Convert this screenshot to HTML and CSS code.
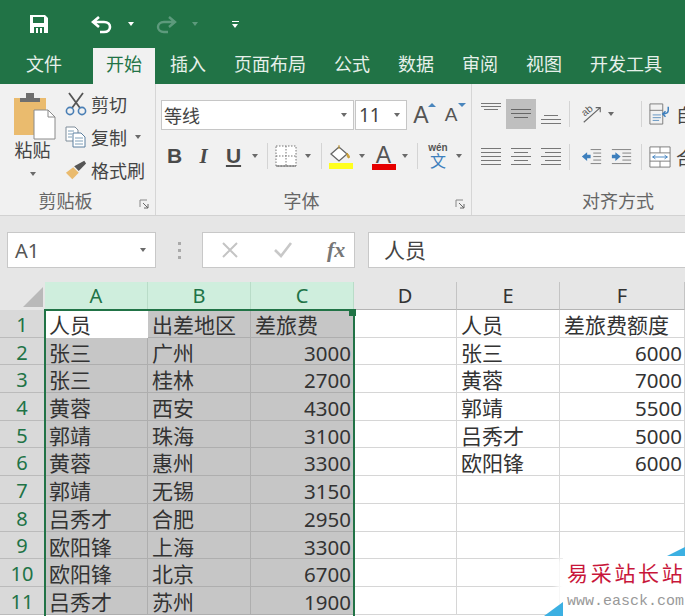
FILE: index.html
```html
<!DOCTYPE html>
<html lang="zh-CN">
<head>
    <meta charset="UTF-8">
    <title>Excel</title>
    <link rel="stylesheet" href="styles.css">
</head>
<body>

    <div class="quick-bar">
        <svg class="qa-save" width="20" height="20" viewBox="0 0 20 20"><path d="M1 1h15l3 3v15H1z" fill="#fff"/><path d="M4 3h11v6H4z" fill="#217346"/><path d="M5 13h10v6H5z" fill="#217346"/><path d="M7 14h2v5H7zM11 14h2v5h-2z" fill="#fff"/></svg>
        <svg class="qa-undo" width="22" height="20" viewBox="0 0 22 20"><path d="M8 2 2 7l6 5M2 7h11c8 0 8 10 0 10H9" fill="none" stroke="#fff" stroke-width="2.6"/></svg>
        <span class="caret caret-white qa-undo-caret"></span>
        <svg class="qa-redo" width="22" height="20" viewBox="0 0 22 20"><path d="M14 2l6 5-6 5M20 7H9c-8 0-8 10 0 10h4" fill="none" stroke="#5d9a7c" stroke-width="2.4"/></svg>
        <span class="caret caret-dim qa-redo-caret"></span>
        <span class="qa-custom"><i></i><span class="caret caret-white"></span></span>
    </div>

    <div class="tabs">
        <div class="tab tab-file">文件</div>
        <div class="tab tab-active">开始</div>
        <div class="tab">插入</div>
        <div class="tab">页面布局</div>
        <div class="tab">公式</div>
        <div class="tab">数据</div>
        <div class="tab">审阅</div>
        <div class="tab">视图</div>
        <div class="tab">开发工具</div>
    </div>

    <div class="ribbon">
        <div class="group group-clip">
            <div class="clip-body">
                <div class="paste">
                    <svg width="44" height="48" viewBox="0 0 44 48"><rect x="1" y="6" width="32" height="37" fill="#eabb6e"/><path d="M7 6h6V1h8v5h6v4H7z" fill="#6f6f6f"/><path d="M21 18h14l7 7v22H21z" fill="#fff" stroke="#8a8a8a"/><path d="M35 18v7h7" fill="none" stroke="#8a8a8a"/></svg>
                    <span class="paste-label">粘贴</span>
                    <span class="caret"></span>
                </div>
                <div class="clip-rows">
                    <div class="clip-row">
                        <svg width="22" height="24" viewBox="0 0 22 24"><path d="M4 1l11 15M18 1 7 16" stroke="#555" stroke-width="1.8" fill="none"/><circle cx="5" cy="19" r="3.600" fill="none" stroke="#4a7fb5" stroke-width="1.600"/><circle cx="17" cy="19" r="3.600" fill="none" stroke="#4a7fb5" stroke-width="1.600"/></svg>
                        <span>剪切</span>
                    </div>
                    <div class="clip-row">
                        <svg width="22" height="22" viewBox="0 0 22 22"><path d="M1 1h9l3 3v11H1z" fill="#fff" stroke="#7f8d9a"/><path d="M8 7h8l4 4v10H8z" fill="#fff" stroke="#5b7f9f"/><path d="M3 5h6M3 8h4M3 11h4M10 12h8M10 15h8M10 18h8" stroke="#7f9fb8"/></svg>
                        <span>复制</span>
                        <span class="caret caret-clip"></span>
                    </div>
                    <div class="clip-row">
                        <svg width="24" height="22" viewBox="0 0 24 22"><path d="M1 14 9 8l6 6-7 7z" fill="#eabb6e"/><path d="M10 7l5 5 8-8-2-3z" fill="#555"/></svg>
                        <span>格式刷</span>
                    </div>
                </div>
            </div>
            <div class="group-foot">
                <span class="group-label">剪贴板</span>
                <svg class="launcher" width="10" height="10" viewBox="0 0 10 10"><path d="M1 8V1h7" fill="none" stroke="#888"/><path d="M4 4l5 5M9 5v4H5" fill="none" stroke="#666"/></svg>
            </div>
        </div>

        <div class="group group-font">
            <div class="font-row">
                <div class="combo combo-name"><span>等线</span><span class="caret"></span></div>
                <div class="combo combo-size"><span>11</span><span class="caret"></span></div>
                <div class="size-btn size-grow">A<i class="tri-up"></i></div>
                <div class="size-btn size-shrink">A<i class="tri-down"></i></div>
            </div>
            <div class="font-tools">
                <span class="tool-b">B</span>
                <span class="tool-i">I</span>
                <span class="tool-u">U</span>
                <span class="caret"></span>
                <span class="sep"></span>
                <svg width="22" height="22" viewBox="0 0 22 22"><path d="M1 1h20v20H1zM11 1v20M1 11h20" fill="#fff" stroke="#777" stroke-dasharray="1.500 1.500"/><path d="M1 21h20" stroke="#666"/></svg>
                <span class="caret"></span>
                <span class="sep"></span>
                <div class="tool-color">
                    <svg width="24" height="18" viewBox="0 0 24 18"><path d="M10 3 2 10l8 7 8-7z" fill="#fff" stroke="#666" stroke-width="1.300"/><path d="M10 5V1M18 9c2 2 3 4 2 5-2 0-2-3-2-5z" stroke="#c59a33" fill="#d5a93b"/></svg>
                    <i class="swatch swatch-yellow"></i>
                </div>
                <span class="caret"></span>
                <div class="tool-color tool-a">
                    <span>A</span>
                    <i class="swatch swatch-red"></i>
                </div>
                <span class="caret"></span>
                <span class="sep"></span>
                <div class="tool-wen"><small>wén</small><span>文</span></div>
                <span class="caret"></span>
            </div>
            <div class="group-foot">
                <span class="group-label">字体</span>
                <svg class="launcher" width="10" height="10" viewBox="0 0 10 10"><path d="M1 8V1h7" fill="none" stroke="#888"/><path d="M4 4l5 5M9 5v4H5" fill="none" stroke="#666"/></svg>
            </div>
        </div>

        <div class="group group-align">
            <div class="align-row align-row-top">
                <svg width="30" height="30" viewBox="0 0 30 30"><path d="M5 4.500h20M5 7.500h20M8 10.500h14" stroke="#777" fill="none"/></svg>
                <svg class="align-on" width="30" height="30" viewBox="0 0 30 30"><path d="M5 10.500h20M5 14.500h20M8 18.500h14" stroke="#666" fill="none"/></svg>
                <svg width="30" height="30" viewBox="0 0 30 30"><path d="M8 16.500h14M5 20.500h20M5 24.500h20" stroke="#777" fill="none"/></svg>
                <span class="sep"></span>
                <svg class="align-orient" width="22" height="24" viewBox="0 0 24 24"><path d="M3 21 21 5M16 5h5v5" stroke="#666" fill="none" stroke-width="1.200"/><text x="2" y="13" class="orient-text" transform="rotate(-40 6 11)">ab</text></svg>
                <span class="caret"></span>
                <span class="sep sep-far"></span>
                <svg width="22" height="24" viewBox="0 0 24 24"><path d="M1 1h14v22H1zM1 8h14" fill="none" stroke="#777"/><path d="M4 13h9M4 16h9M4 19h7" stroke="#5b8fbe"/><path d="M21 4v4c0 3-2 4-6 4M18 9l-3 3 3 3" fill="none" stroke="#3d7fbd" stroke-width="1.600"/></svg>
                <span class="align-text">自动换行</span>
            </div>
            <div class="align-row">
                <svg width="30" height="30" viewBox="0 0 30 30"><path d="M5 6.500h20M5 10.500h20M5 14.500h20M5 18.500h20M5 22.500h20" stroke="#777" fill="none"/></svg>
                <svg width="30" height="30" viewBox="0 0 30 30"><path d="M5 6.500h20M8 10.500h14M5 14.500h20M8 18.500h14M5 22.500h20" stroke="#777" fill="none"/></svg>
                <svg width="30" height="30" viewBox="0 0 30 30"><path d="M5 6.500h20M9 10.500h16M5 14.500h20M9 18.500h16M5 22.500h20" stroke="#777" fill="none"/></svg>
                <span class="sep"></span>
                <svg width="21" height="24" viewBox="0 0 24 24"><path d="M11 3.500h12M14 7.500h9M14 11.500h9M14 15.500h9M11 19.500h12" stroke="#777" fill="none"/><path d="M1 11.500l6-5v3h4v4H7v3z" fill="#3d7fbd"/></svg>
                <svg class="align-indent" width="21" height="24" viewBox="0 0 24 24"><path d="M1 3.500h22M13 7.500h10M13 11.500h10M13 15.500h10M1 19.500h22" stroke="#777" fill="none"/><path d="M11 11.500l-6-5v3H1v4h4v3z" fill="#3d7fbd"/></svg>
                <span class="sep sep-far2"></span>
                <svg width="22" height="24" viewBox="0 0 24 24"><path d="M1 1h22v22H1zM1 7.500h22M1 16.500h22M12 1v6.500M12 16.500V23" fill="#fff" stroke="#777"/><path d="M4 12h16M7 10l-3 2 3 2M17 10l3 2-3 2" fill="none" stroke="#3d7fbd"/></svg>
                <span class="align-text">合并后居中</span>
            </div>
            <div class="group-foot">
                <span class="group-label">对齐方式</span>
                <span class="launcher-gap"></span>
            </div>
        </div>
    </div>

    <div class="formula-bar">
        <div class="name-box"><span>A1</span><span class="caret"></span></div>
        <div class="fb-dots"><i></i><i></i><i></i></div>
        <div class="fb-buttons">
            <svg width="18" height="18" viewBox="0 0 18 18"><path d="M2 2l14 14M16 2 2 16" stroke="#c4c4c4" stroke-width="2"/></svg>
            <svg width="20" height="18" viewBox="0 0 20 18"><path d="M2 9l6 6L18 2" stroke="#c8c8c8" stroke-width="2.600" fill="none"/></svg>
            <span class="fx">fx</span>
        </div>
        <div class="fb-input">人员</div>
    </div>

    <div class="sheet">
        <div class="grid">
            <div class="corner"><i></i></div>
            <div class="col col-on">A</div>
            <div class="col col-on">B</div>
            <div class="col col-on">C</div>
            <div class="col">D</div>
            <div class="col">E</div>
            <div class="col">F</div>

            <div class="row">1</div>
            <div class="cell cell-active">人员</div>
            <div class="cell sel">出差地区</div>
            <div class="cell sel">差旅费</div>
            <div class="cell"></div>
            <div class="cell">人员</div>
            <div class="cell">差旅费额度</div>

            <div class="row">2</div>
            <div class="cell sel">张三</div>
            <div class="cell sel">广州</div>
            <div class="cell sel num">3000</div>
            <div class="cell"></div>
            <div class="cell">张三</div>
            <div class="cell num">6000</div>

            <div class="row">3</div>
            <div class="cell sel">张三</div>
            <div class="cell sel">桂林</div>
            <div class="cell sel num">2700</div>
            <div class="cell"></div>
            <div class="cell">黄蓉</div>
            <div class="cell num">7000</div>

            <div class="row">4</div>
            <div class="cell sel">黄蓉</div>
            <div class="cell sel">西安</div>
            <div class="cell sel num">4300</div>
            <div class="cell"></div>
            <div class="cell">郭靖</div>
            <div class="cell num">5500</div>

            <div class="row">5</div>
            <div class="cell sel">郭靖</div>
            <div class="cell sel">珠海</div>
            <div class="cell sel num">3100</div>
            <div class="cell"></div>
            <div class="cell">吕秀才</div>
            <div class="cell num">5000</div>

            <div class="row">6</div>
            <div class="cell sel">黄蓉</div>
            <div class="cell sel">惠州</div>
            <div class="cell sel num">3300</div>
            <div class="cell"></div>
            <div class="cell">欧阳锋</div>
            <div class="cell num">6000</div>

            <div class="row">7</div>
            <div class="cell sel">郭靖</div>
            <div class="cell sel">无锡</div>
            <div class="cell sel num">3150</div>
            <div class="cell"></div>
            <div class="cell"></div>
            <div class="cell"></div>

            <div class="row">8</div>
            <div class="cell sel">吕秀才</div>
            <div class="cell sel">合肥</div>
            <div class="cell sel num">2950</div>
            <div class="cell"></div>
            <div class="cell"></div>
            <div class="cell"></div>

            <div class="row">9</div>
            <div class="cell sel">欧阳锋</div>
            <div class="cell sel">上海</div>
            <div class="cell sel num">3300</div>
            <div class="cell"></div>
            <div class="cell"></div>
            <div class="cell"></div>

            <div class="row">10</div>
            <div class="cell sel">欧阳锋</div>
            <div class="cell sel">北京</div>
            <div class="cell sel num">6700</div>
            <div class="cell"></div>
            <div class="cell"></div>
            <div class="cell"></div>

            <div class="row">11</div>
            <div class="cell sel">吕秀才</div>
            <div class="cell sel">苏州</div>
            <div class="cell sel num">1900</div>
            <div class="cell"></div>
            <div class="cell"></div>
            <div class="cell"></div>
        </div>
        <div class="selection"><i></i></div>
    </div>

    <div class="watermark">
        <i class="wm-tri-top"></i>
        <i class="wm-tri-bottom"></i>
        <div class="wm-title">易采站长站</div>
        <div class="wm-url">www.easck.com</div>
    </div>

</body>
</html>
```
FILE: styles.css
```css
* {
    box-sizing: border-box;
}
html, body {
    height: 616px;
}
body {
    margin: 0;
    width: 685px;
    overflow: hidden;
    position: relative;
    background: #fff;
    color: #444;
    font-family: "Noto Sans", "Noto Sans CJK SC", sans-serif;
}
i {
    display: block;
}
svg {
    display: block;
    flex: none;
}
.caret {
    display: block;
    flex: none;
    width: 0;
    height: 0;
    border-left: 3.5px solid transparent;
    border-right: 3.5px solid transparent;
    border-top: 4px solid #6a6a6a;
}
.caret-white {
    border-top-color: #fff;
}
.caret-dim {
    border-top-color: #5d9a7c;
}

/* title bar */
.quick-bar {
    height: 48px;
    background: #217346;
    display: flex;
    align-items: center;
    padding-left: 29px;
}
.qa-undo {
    margin-left: 42px;
    margin-top: 2px;
}
.qa-undo-caret {
    margin-left: 15px;
}
.qa-redo {
    margin-left: 21px;
    margin-top: 2px;
}
.qa-redo-caret {
    margin-left: 15px;
}
.qa-custom {
    margin-left: 34px;
    display: flex;
    flex-direction: column;
    gap: 2px;
}
.qa-custom i {
    width: 7px;
    height: 1px;
    background: #fff;
}
.tabs {
    height: 36px;
    background: #217346;
    display: flex;
    color: #e6f0ea;
    font-size: 18px;
    line-height: 33px;
}
.tab {
    padding: 0 14px;
    white-space: nowrap;
}
.tab-file {
    padding: 0 31px 0 26px;
}
.tab-active {
    padding: 0 13px;
    margin-right: 1px;
    background: #f1f1f1;
    color: #217346;
}

/* ribbon */
.ribbon {
    height: 132px;
    background: #f1f1f1;
    border-bottom: 1px solid #d2d2d2;
    display: flex;
    font-size: 18px;
    color: #444;
}
.group {
    flex: none;
    display: flex;
    flex-direction: column;
    border-right: 1px solid #d6d6d6;
}
.group-foot {
    margin-top: auto;
    height: 28px;
    display: flex;
    align-items: center;
    color: #666;
    line-height: 24px;
}
.group-label {
    flex: 1;
    text-align: center;
}
.launcher {
    margin: 6px 6px 0 8px;
}
.launcher-gap {
    width: 24px;
}
.sep {
    display: block;
    flex: none;
    width: 1px;
    height: 26px;
    background: #d4d4d4;
}

.group-clip {
    width: 156px;
}
.clip-body {
    display: flex;
    padding-top: 3px;
}
.paste {
    width: 65px;
    display: flex;
    flex-direction: column;
    align-items: center;
    padding-top: 5px;
}
.paste svg {
    margin-left: 4px;
}
.paste-label {
    line-height: 24px;
    margin-top: -2px;
}
.paste .caret {
    margin-top: 10px;
}
.clip-row {
    height: 33px;
    display: flex;
    align-items: center;
    gap: 4px;
}
.clip-row svg {
    width: 22px;
}
.caret-clip {
    margin-left: 4px;
}

.group-font {
    width: 316px;
}
.font-row {
    margin-top: 16px;
    padding-left: 5px;
    display: flex;
    height: 30px;
}
.combo {
    height: 30px;
    background: #fff;
    border: 1px solid #c6c6c6;
    display: flex;
    align-items: center;
    justify-content: space-between;
    padding: 0 6px 0 2px;
}
.combo-name {
    width: 193px;
}
.combo-size {
    width: 52px;
    margin-left: 1px;
    padding-left: 3px;
    font-size: 19px;
}
.size-btn {
    position: relative;
    width: 30px;
    text-align: center;
    font-size: 23px;
    line-height: 30px;
    font-family: "Liberation Sans", sans-serif;
    color: #555;
    padding-right: 2px;
}
.size-shrink {
    font-size: 19px;
}
.tri-up, .tri-down {
    position: absolute;
    top: 3px;
    right: 1px;
    width: 0;
    height: 0;
    border-left: 4px solid transparent;
    border-right: 4px solid transparent;
}
.tri-up {
    border-bottom: 4px solid #4a86bd;
}
.tri-down {
    border-top: 4px solid #4a86bd;
}
.font-tools {
    margin-top: 11px;
    padding-left: 4px;
    height: 30px;
    display: grid;
    grid-template-columns: 29px 29px 31px 12px 12px 26px 18px 8px 32px 10px 33px 10px 14px 28px 14px;
    align-items: center;
    justify-items: center;
}
.tool-b, .tool-i, .tool-u {
    font-family: "Liberation Sans", sans-serif;
    font-weight: bold;
    font-size: 21px;
    color: #4a4a4a;
}
.tool-i {
    font-family: "Liberation Serif", serif;
    font-style: italic;
}
.tool-u {
    text-decoration: underline;
    text-underline-offset: 2px;
}
.tool-color {
    display: flex;
    flex-direction: column;
    align-items: center;
}
.swatch {
    width: 24px;
    height: 6px;
    margin-top: 1px;
}
.swatch-yellow {
    background: #ffff1e;
}
.swatch-red {
    background: #e60000;
    margin-top: -3px;
}
.tool-a span {
    font-family: "Liberation Sans", sans-serif;
    font-size: 23px;
    line-height: 24px;
    color: #555;
}
.tool-wen {
    display: flex;
    flex-direction: column;
    align-items: center;
    color: #3d7fbd;
    line-height: 1;
}
.tool-wen small {
    font-family: "Liberation Sans", sans-serif;
    font-size: 10px;
    font-weight: bold;
    color: #555;
}
.tool-wen span {
    font-size: 16px;
}

.group-align {
    width: 316px;
    border-right: none;
}
.align-row {
    display: flex;
    align-items: center;
    height: 30px;
    margin-top: 13px;
    padding-left: 4px;
}
.align-row-top {
    margin-top: 15px;
}
.align-row .sep {
    margin: 0 11px 0 3px;
}
.orient-text {
    font-family: "Liberation Sans", sans-serif;
    font-size: 11px;
    fill: #555;
}
.align-on {
    background: #bfbfbf;
}
.align-orient + .caret {
    margin-left: 5px;
}
.align-row .sep-far {
    margin: 0 7px 0 27px;
}
.align-row .sep-far2 {
    margin: 0 7px 0 9px;
}
.align-indent {
    margin-left: 9px;
}
.align-text {
    margin-left: 5px;
    white-space: nowrap;
}

/* formula bar */
.formula-bar {
    height: 66px;
    background: #e6e6e6;
    padding: 16px 0 0 7px;
    display: flex;
    align-items: flex-start;
}
.name-box {
    width: 149px;
    height: 36px;
    background: #fff;
    border: 1px solid #c8c8c8;
    display: flex;
    align-items: center;
    justify-content: space-between;
    padding: 0 9px 0 7px;
    font-size: 20px;
    color: #555;
}
.fb-dots {
    width: 46px;
    height: 36px;
    display: flex;
    flex-direction: column;
    align-items: center;
    justify-content: center;
    gap: 4px;
}
.fb-dots i {
    width: 3px;
    height: 3px;
    background: #aaa;
}
.fb-buttons {
    width: 153px;
    height: 36px;
    background: #fff;
    border: 1px solid #c8c8c8;
    display: flex;
    align-items: center;
    gap: 34px;
    padding-left: 18px;
}
.fx {
    font-family: "Liberation Serif", serif;
    font-style: italic;
    font-weight: bold;
    font-size: 22px;
    color: #777;
}
.fb-input {
    margin-left: 13px;
    flex: 1;
    height: 36px;
    background: #fff;
    border: 1px solid #c8c8c8;
    border-right: none;
    font-size: 21px;
    line-height: 34px;
    padding-left: 15px;
}

/* sheet */
.sheet {
    position: relative;
    height: 334px;
    overflow: hidden;
}
.grid {
    display: grid;
    grid-template-columns: 45px 103px 103px 103px 103px 103px 125px;
    grid-auto-rows: 27.7px;
    grid-template-rows: 28px;
    font-size: 21px;
    color: #333;
}
.corner {
    background: #e6e6e6;
    display: flex;
    align-items: flex-end;
    justify-content: flex-end;
    padding: 0 2px 3px 0;
}
.corner i {
    width: 0;
    height: 0;
    border-bottom: 20px solid #b9b9b9;
    border-left: 20px solid transparent;
}
.col {
    background: #e6e6e6;
    border-right: 1px solid #c4c4c4;
    border-bottom: 1px solid #b4b4b4;
    display: flex;
    align-items: center;
    justify-content: center;
    font-size: 20px;
    color: #333;
}
.col-on {
    background: #cfeedd;
    border-right-color: #b9dcc8;
    color: #217346;
}
.row {
    background: #d9d9d9;
    border-bottom: 1px solid #bbb;
    border-right: 1px solid #bbb;
    display: flex;
    align-items: center;
    justify-content: center;
    padding-top: 2px;
    font-size: 20px;
    color: #217346;
}
.cell {
    border-right: 1px solid #d6d6d6;
    border-bottom: 1px solid #d6d6d6;
    padding: 0 3px 0 4px;
    line-height: 31px;
    white-space: nowrap;
    overflow: hidden;
}
.sel {
    background: #c6c6c6;
    border-color: #aeaeae;
}
.cell-active {
    background: #fff;
    border-color: #fff;
}
.num {
    text-align: right;
    font-size: 20.5px;
    padding-right: 2px;
}
.selection {
    position: absolute;
    top: 27px;
    left: 44px;
    width: 311px;
    height: 320px;
    border: 2px solid #217346;
}
.selection i {
    position: absolute;
    top: -2px;
    right: -3px;
    width: 7px;
    height: 7px;
    background: #217346;
}

/* watermark over the corner */
.watermark {
    position: absolute;
    right: 0;
    bottom: 0;
    width: 122px;
    height: 60px;
    background: #fff;
    padding-left: 4px;
    box-shadow: -8px 0 6px -2px #fff;
}
.wm-tri-top {
    position: absolute;
    top: -9px;
    right: 0;
    width: 0;
    height: 0;
    border-bottom: 9px solid #3cb0e2;
    border-left: 18px solid transparent;
}
.wm-tri-bottom {
    position: absolute;
    bottom: 0;
    left: -19px;
    width: 0;
    height: 0;
    border-bottom: 14px solid #3cb0e2;
    border-left: 19px solid transparent;
}
.wm-title {
    font-family: "Liberation Serif", "Noto Sans CJK SC", serif;
    font-size: 21px;
    letter-spacing: 2.7px;
    color: #c8163a;
    line-height: 36px;
    white-space: nowrap;
}
.wm-url {
    font-family: "Liberation Mono", monospace;
    font-size: 15px;
    color: #999;
    line-height: 19px;
    white-space: nowrap;
}
```
